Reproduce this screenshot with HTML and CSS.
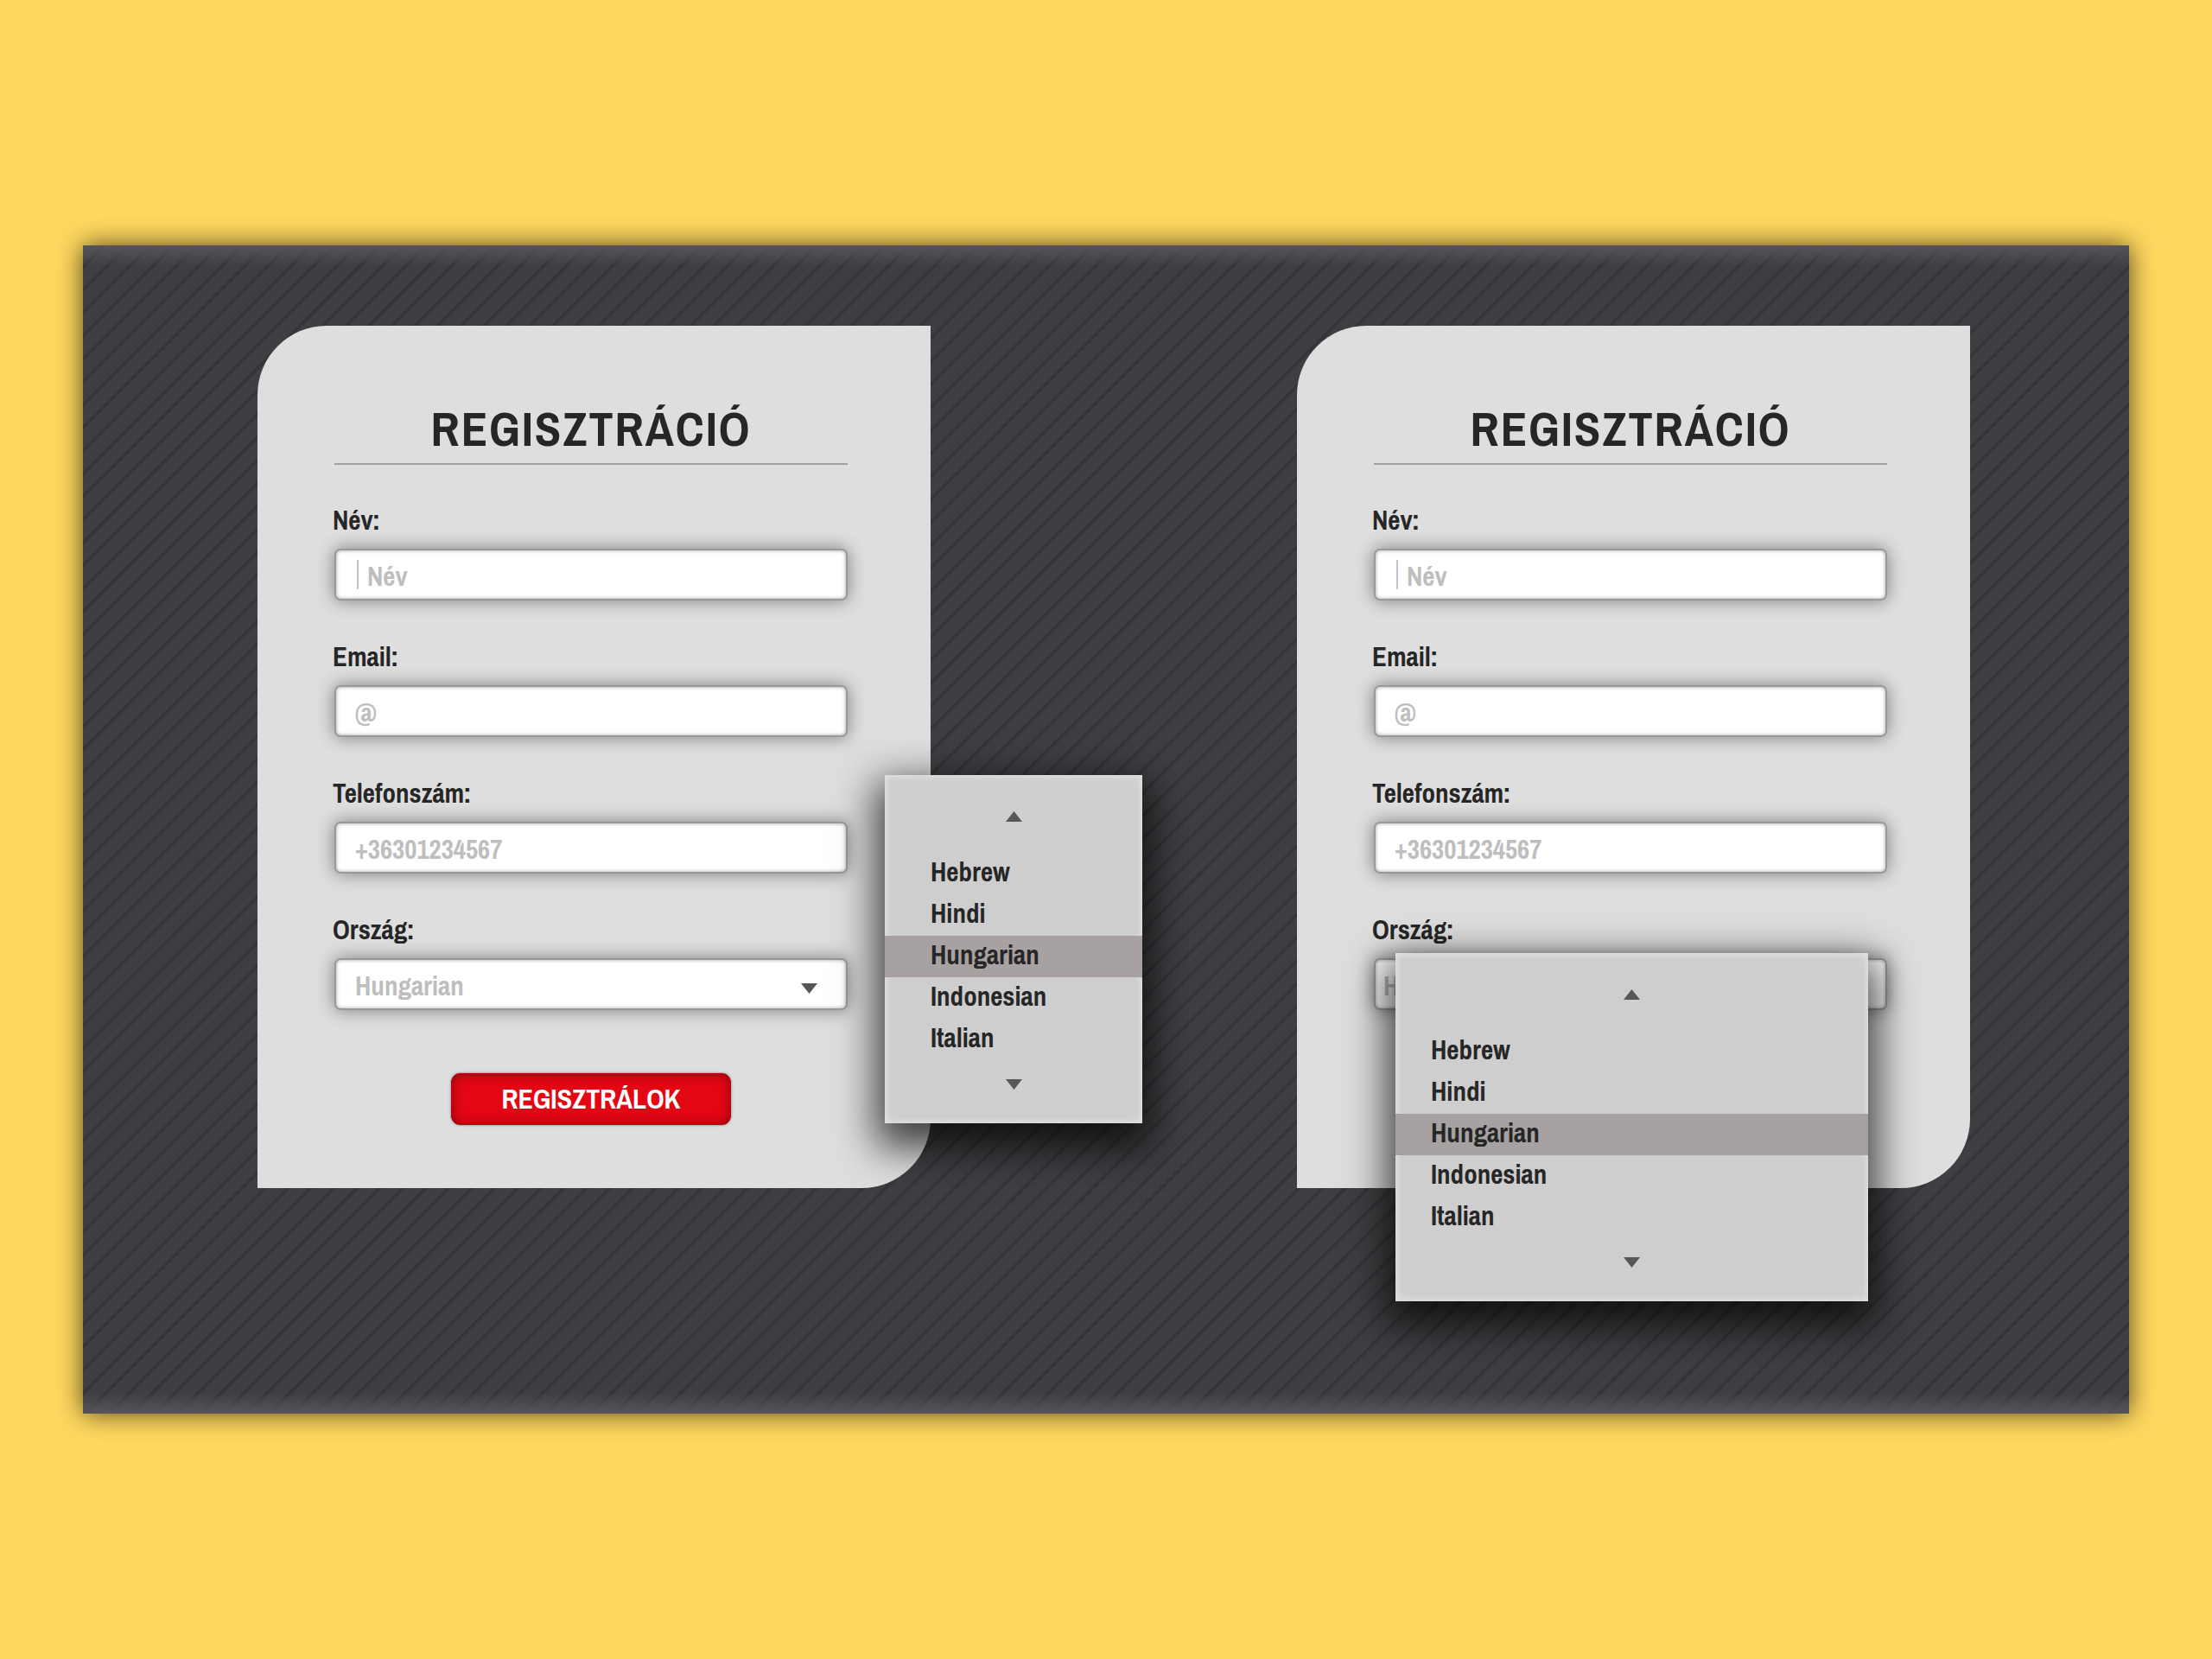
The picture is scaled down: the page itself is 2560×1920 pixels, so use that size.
FILE: index.html
```html
<!DOCTYPE html>
<html lang="hu">
<head>
<meta charset="utf-8">
<title>Regisztráció</title>
<link rel="stylesheet" href="styles.css">
</head>
<body>
<main class="stage">
  <section class="card">
    <form class="form">
      <h1 class="title">REGISZTRÁCIÓ</h1>
      <div class="field">
        <label class="label" for="name-a">Név:</label>
        <div class="control control-active"><input class="input" id="name-a" type="text" placeholder="Név"></div>
      </div>
      <div class="field">
        <label class="label" for="email-a">Email:</label>
        <div class="control"><input class="input" id="email-a" type="email" placeholder="@"></div>
      </div>
      <div class="field">
        <label class="label" for="phone-a">Telefonszám:</label>
        <div class="control"><input class="input" id="phone-a" type="tel" placeholder="+36301234567"></div>
      </div>
      <div class="field">
        <label class="label" for="country-a">Ország:</label>
        <div class="control">
          <select class="input" id="country-a"><option>Hungarian</option></select>
          <svg class="arrow" viewBox="0 0 19 12" aria-hidden="true"><path d="M0 0h19L9.500 12z"/></svg>
        </div>
      </div>
      <button class="submit" type="button">REGISZTRÁLOK</button>
    </form>
    <div class="menu menu-side">
      <button class="scroll" type="button" aria-label="Fel"><svg class="arrow" viewBox="0 0 19 12"><path d="M0 12h19L9.500 0z"/></svg></button>
      <ul class="options">
        <li class="option">Hebrew</li>
        <li class="option">Hindi</li>
        <li class="option option-selected">Hungarian</li>
        <li class="option">Indonesian</li>
        <li class="option">Italian</li>
      </ul>
      <button class="scroll" type="button" aria-label="Le"><svg class="arrow" viewBox="0 0 19 12"><path d="M0 0h19L9.500 12z"/></svg></button>
    </div>
  </section>
  <section class="card">
    <form class="form">
      <h1 class="title">REGISZTRÁCIÓ</h1>
      <div class="field">
        <label class="label" for="name-b">Név:</label>
        <div class="control control-active"><input class="input" id="name-b" type="text" placeholder="Név"></div>
      </div>
      <div class="field">
        <label class="label" for="email-b">Email:</label>
        <div class="control"><input class="input" id="email-b" type="email" placeholder="@"></div>
      </div>
      <div class="field">
        <label class="label" for="phone-b">Telefonszám:</label>
        <div class="control"><input class="input" id="phone-b" type="tel" placeholder="+36301234567"></div>
      </div>
      <div class="field">
        <label class="label" for="country-b">Ország:</label>
        <div class="control control-open">
          <select class="input" id="country-b"><option>Hungarian</option></select>
          <div class="menu menu-below">
            <button class="scroll" type="button" aria-label="Fel"><svg class="arrow" viewBox="0 0 19 12"><path d="M0 12h19L9.500 0z"/></svg></button>
            <ul class="options">
              <li class="option">Hebrew</li>
              <li class="option">Hindi</li>
              <li class="option option-selected">Hungarian</li>
              <li class="option">Indonesian</li>
              <li class="option">Italian</li>
            </ul>
            <button class="scroll" type="button" aria-label="Le"><svg class="arrow" viewBox="0 0 19 12"><path d="M0 0h19L9.500 12z"/></svg></button>
          </div>
        </div>
      </div>
    </form>
  </section>
</main>
</body>
</html>
```
FILE: styles.css
```css
* {
  box-sizing: border-box;
}

body {
  margin: 0;
  min-height: 100vh;
  display: flex;
  align-items: center;
  padding: 0 96px;
  background: #ffd85f;
  color: #262626;
  font: bold 31px/40px "Archivo Narrow", "Liberation Sans Narrow", "Liberation Sans", sans-serif;
}

.stage {
  flex: 1;
  display: grid;
  grid-template-columns: 1fr 1fr;
  column-gap: 424px;
  padding: 93px 184px 261px 202px;
  background:
    linear-gradient(#56555d, #56555d00 24px calc(100% - 24px), #56555d),
    repeating-linear-gradient(135deg, #37363a 0, #3f3e42 1% 8%, #343337 9%, #37363a 10%) 0 0 / 133px 133px;
  box-shadow: 0 0 28px #000000b0;
}

.card {
  position: relative;
  min-height: 998px;
  padding: 88px 96px 73px 89px;
  border-radius: 80px 0;
  background: #dedede;
}

.form {
  display: flex;
  flex-direction: column;
}

.title {
  margin: 0 0 44px;
  padding-bottom: 9px;
  border-bottom: 2px solid #a0a0a0;
  font-size: 56px;
  line-height: 62px;
  letter-spacing: 2px;
  text-align: center;
}

.field {
  height: 158px;
}

.label {
  display: block;
  margin: 0 0 13px -2px;
}

.control {
  position: relative;
  display: flex;
  align-items: center;
  height: 60px;
  padding: 0 22px;
  border: 2px solid #999;
  border-radius: 7px;
  background: #fff;
  box-shadow: 0 0 20px #00000070, inset 0 0 4px #00000060;
}

.control-active::before {
  content: "";
  width: 2px;
  height: 34px;
  margin: 0 10px 0 2px;
  background: #c4c4c4;
}

.control-open {
  padding-left: 9px;
}

.input {
  flex: 1;
  min-width: 0;
  padding: 4px 0 0;
  border: 0;
  outline: 0;
  appearance: none;
  background: none;
  color: #bebebe;
  font: inherit;
}

.input::placeholder {
  color: #bebebe;
  opacity: 1;
}

.arrow {
  display: block;
  width: 19px;
  height: 12px;
  fill: #565656;
}

.control > .arrow {
  margin: 10px 11px 0 0;
}

.submit {
  align-self: center;
  width: 324px;
  height: 60px;
  margin-top: 28px;
  border: 0;
  border-radius: 11px;
  background: #e30613;
  color: #fff;
  font: inherit;
  font-size: 32px;
  box-shadow: inset 0 0 14px #00000070, 0 0 3px #00000080;
}

.menu {
  position: absolute;
  z-index: 1;
  padding: 30px 0 27px;
  background: #cecece;
  box-shadow: 0 18px 44px 10px #000000b8, inset 0 0 6px 3px #e0e0e0;
}

.menu-side {
  top: 520px;
  right: -245px;
  width: 298px;
  --indent: 53px;
}

.menu-below {
  top: -8px;
  left: 23px;
  right: 20px;
  --indent: 41px;
}

.scroll {
  display: flex;
  align-items: center;
  justify-content: center;
  width: 100%;
  height: 36px;
  padding: 0;
  border: 0;
  background: none;
}

.options {
  margin: 24px 0 10px;
  padding: 0;
  list-style: none;
}

.option {
  height: 48px;
  padding-left: var(--indent);
  line-height: 44px;
}

.option-selected {
  background: #a8a1a1;
}
```
